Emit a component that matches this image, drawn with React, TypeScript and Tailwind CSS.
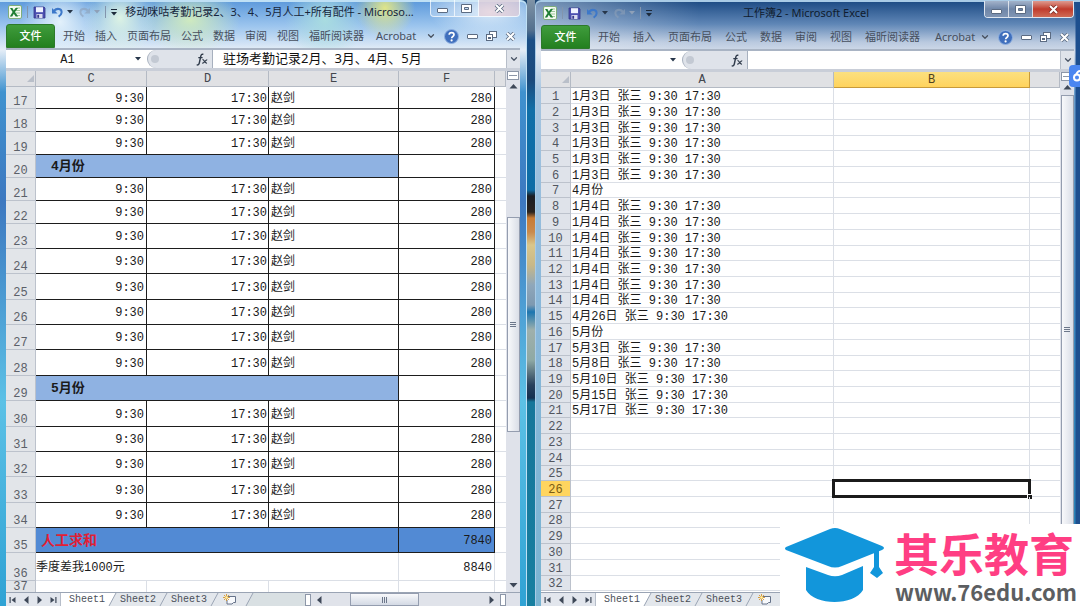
import React from 'react';
import { ChevronDown } from 'lucide-react';

const UI_FONT = "font-['Noto_Sans','Noto_Sans_CJK_SC',sans-serif]";
const CELL_FONT = "font-['Liberation_Mono','Noto_Sans_CJK_SC',monospace]";

type LeftRow = {
  n: number;
  height: string;
  kind: 'time' | 'month' | 'total' | 'note' | 'empty';
  label?: string;
  amount?: string;
};

const time = (n: number, height = 'h-[25px]'): LeftRow => ({ n, height, kind: 'time', amount: '280' });

const leftRows: LeftRow[] = [
  time(17, 'h-[22px]'),
  time(18, 'h-[23px]'),
  time(19, 'h-[23px]'),
  { n: 20, height: 'h-[23px]', kind: 'month', label: '4月份' },
  time(21, 'h-[23px]'),
  time(22, 'h-[23px]'),
  time(23),
  time(24),
  time(25, 'h-[26px]'),
  time(26),
  time(27),
  time(28, 'h-[26px]'),
  { n: 29, height: 'h-[25px]', kind: 'month', label: '5月份' },
  time(30, 'h-[26px]'),
  time(31),
  time(32),
  time(33, 'h-[26px]'),
  time(34),
  { n: 35, height: 'h-[25px]', kind: 'total', label: '人工求和', amount: '7840' },
  { n: 36, height: 'h-[28px]', kind: 'note', label: '季度差我1000元', amount: '8840' },
  { n: 37, height: 'h-[16px]', kind: 'empty' },
];

const rightLines = [
  '1月3日 张三 9:30 17:30',
  '1月3日 张三 9:30 17:30',
  '1月3日 张三 9:30 17:30',
  '1月3日 张三 9:30 17:30',
  '1月3日 张三 9:30 17:30',
  '1月3日 张三 9:30 17:30',
  '4月份',
  '1月4日 张三 9:30 17:30',
  '1月4日 张三 9:30 17:30',
  '1月4日 张三 9:30 17:30',
  '1月4日 张三 9:30 17:30',
  '1月4日 张三 9:30 17:30',
  '1月4日 张三 9:30 17:30',
  '1月4日 张三 9:30 17:30',
  '4月26日 张三 9:30 17:30',
  '5月份',
  '5月3日 张三 9:30 17:30',
  '5月8日 张三 9:30 17:30',
  '5月10日 张三 9:30 17:30',
  '5月15日 张三 9:30 17:30',
  '5月17日 张三 9:30 17:30',
];

const menuTabs = ['开始', '插入', '页面布局', '公式', '数据', '审阅', '视图', '福昕阅读器'];

/* ---------- icons ---------- */

const ExcelIcon = () => (
  <svg width="14" height="14" viewBox="0 0 14 14">
    <rect x="0.5" y="0.5" width="13" height="13" rx="1.5" fill="#f3faf1" stroke="#7fae7c" />
    <path d="M8 3h4M8 5.5h4M8 8h4M8 10.5h4" stroke="#9cc79a" strokeWidth="1" />
    <path d="M2 3h2.4l1.4 2.4L7.6 3H10L7 7l3.2 4.4H7.7L5.8 8.7l-1.6 2.7H1.8L4.6 7z" fill="#1f7d33" />
  </svg>
);

const SaveIcon = () => (
  <svg width="13" height="13" viewBox="0 0 13 13">
    <path d="M1 1h10l1 1v10H1z" fill="#4b4fb0" stroke="#35378a" strokeWidth="0.8" />
    <rect x="3" y="1.2" width="7" height="5" fill="#eef2ff" />
    <rect x="3.5" y="8" width="6" height="4" fill="#d9dcf0" />
    <rect x="4.3" y="8.8" width="1.8" height="3" fill="#35378a" />
  </svg>
);

const UndoIcon = ({ flip = false }: { flip?: boolean }) => (
  <svg width="13" height="12" viewBox="0 0 13 12" className={flip ? '-scale-x-100 opacity-60' : ''}>
    <path d="M3 4.8C6 1.6 11 2.6 10.6 6.6 10.4 8.4 9 9.8 7.6 10.6" fill="none" stroke={flip ? '#8da0b8' : '#3d78c9'} strokeWidth="2" />
    <path d="M1 2v5.6h5.6z" fill={flip ? '#8da0b8' : '#3d78c9'} />
  </svg>
);

const Caret = ({ color = '#27364a' }: { color?: string }) => (
  <svg width="6" height="4" viewBox="0 0 6 4">
    <path d="M0 0h6L3 3.5z" fill={color} />
  </svg>
);

const CustomizeIcon = () => (
  <svg width="6" height="7" viewBox="0 0 6 7">
    <path d="M0 0.5h6" stroke="#1d2a3a" />
    <path d="M0 3h6L3 6.5z" fill="#1d2a3a" />
  </svg>
);

const MinIcon = () => (
  <svg width="11" height="5" viewBox="0 0 11 5">
    <rect x="0.5" y="0.5" width="10" height="4" rx="0.5" fill="#fff" stroke="#5b6b82" />
  </svg>
);

const MaxIcon = () => (
  <svg width="11" height="9" viewBox="0 0 11 9">
    <path d="M0.5 0.5h10v8h-10zM3.5 3.5v2h4v-2z" fill="#fff" fillRule="evenodd" stroke="#5b6b82" />
  </svg>
);

const CloseIcon = ({ stroke = '#5b6b82' }: { stroke?: string }) => (
  <svg width="11" height="9" viewBox="0 0 11 9">
    <path d="M2 1l7 7M9 1L2 8" stroke={stroke} strokeWidth="3.6" />
    <path d="M2 1l7 7M9 1L2 8" stroke="#fff" strokeWidth="2" />
  </svg>
);

const RestoreIcon = () => (
  <svg width="11" height="10" viewBox="0 0 11 10">
    <rect x="3.5" y="0.5" width="7" height="6" fill="#fff" stroke="#5b6b82" />
    <rect x="0.5" y="3.5" width="6" height="6" fill="#fff" stroke="#5b6b82" />
    <path d="M2 6h3v2H2z" fill="#5b6b82" />
  </svg>
);

const HelpIcon = () => (
  <svg width="15" height="15" viewBox="0 0 15 15">
    <circle cx="7.5" cy="7.5" r="7" fill="#3f6fbd" stroke="#8fb0e0" />
    <path d="M5.2 5.8c0-3 4.8-2.9 4.8-.1 0 1.8-2.3 1.8-2.3 3.5" fill="none" stroke="#fff" strokeWidth="1.7" />
    <circle cx="7.6" cy="11.4" r="1.1" fill="#fff" />
  </svg>
);

const FxIcon = () => (
  <svg width="12" height="13" viewBox="0 0 12 13">
    <path d="M7.4 1.4C5.6.6 5 2 4.6 4L3.3 10c-.4 1.8-1.3 2.3-2.6 1.7M2.3 4.6h4.3" fill="none" stroke="#2f3a4a" strokeWidth="1.4" />
    <path d="M6.5 6.8c1.8-.8 1.7 3.8 4.5 3.2M11.2 6.8C9.5 6.4 8.2 10.6 6.2 10" fill="none" stroke="#2f3a4a" strokeWidth="1.2" />
  </svg>
);

const NewSheetIcon = () => (
  <svg width="14" height="11" viewBox="0 0 14 11">
    <path d="M5 2.5h7.5v6h-2L9 10H4V6" fill="#f7f9fc" stroke="#66738a" />
    <path d="M3.5 0v7M0 3.5h7M1 1l5 5M6 1L1 6" stroke="#d9962b" strokeWidth="0.9" />
    <circle cx="3.5" cy="3.5" r="1.3" fill="#fff3a8" />
  </svg>
);

const Arrow = ({ d }: { d: string }) => (
  <svg width="9" height="8" viewBox="0 0 9 8">
    <path d={d} fill="#3e4858" />
  </svg>
);

const UP = 'M0.5 6.5h8L4.5 2z';
const DOWN = 'M0.5 2h8L4.5 6.5z';
const LEFT = 'M6.5 0v8L2 4z';
const RIGHT = 'M2.5 0v8L7 4z';
const FIRST = 'M1.5 1h1.2v6H1.5zM7.5 1v6L3.5 4z';
const LAST = 'M6.3 1h1.2v6H6.3zM1.5 1v6L5.5 4z';

/* ---------- window parts ---------- */

const TitleBar = ({ title, active }: { title: string; active: boolean }) => (
  <header className="flex h-6 shrink-0 items-center pl-[2px]">
    <div className="flex items-center gap-[5px]">
      <ExcelIcon />
      <span className="h-3 w-px bg-[#8295ad]" />
      <button aria-label="保存"><SaveIcon /></button>
      <button aria-label="撤销" className="flex items-center gap-[3px]"><UndoIcon /><Caret /></button>
      <button aria-label="恢复" className="flex items-center gap-[3px]"><UndoIcon flip /><Caret color="#8ea0b8" /></button>
      <span className="h-3 w-px bg-[#8295ad]" />
      <button aria-label="自定义快速访问工具栏"><CustomizeIcon /></button>
    </div>
    <h1 className={`min-w-0 flex-1 truncate pl-2 text-center text-[11px] ${active ? 'pr-8 text-[#101c2e]' : 'pr-4 text-[#16263c]'}`}>{title}</h1>
    <div className={`flex h-[17px] shrink-0 self-start overflow-hidden rounded-b-[4px] border border-t-0 ${active ? 'border-[#dfe6f0]' : 'border-white/70 bg-white/25'}`}>
      <button aria-label="最小化" className={`flex w-6 items-center justify-center border-r border-white/70 pt-1 ${active ? 'bg-linear-to-b from-[#a3b3ca] via-[#6f86a8] to-[#8095b4]' : ''}`}><MinIcon /></button>
      <button aria-label="最大化" className={`flex w-6 items-center justify-center border-r border-white/70 ${active ? 'bg-linear-to-b from-[#a3b3ca] via-[#6f86a8] to-[#8095b4]' : ''}`}><MaxIcon /></button>
      <button aria-label="关闭" className={`flex w-10 items-center justify-center ${active ? 'bg-linear-to-b from-[#dd9a90] via-[#c03a2c] to-[#cf6a55]' : 'bg-[#f0b9bd]/40'}`}><CloseIcon stroke={active ? '#7d2c25' : '#5b6b82'} /></button>
    </div>
  </header>
);

const Ribbon = ({ gap }: { gap: string }) => (
  <nav className="flex h-6 shrink-0 items-center text-[11px] text-[#47505e]">
    <button className="h-full w-[49px] shrink-0 rounded-t-[3px] border border-[#2c7a2a] bg-linear-to-b from-[#3f9c3c] to-[#23801f] font-medium text-white">文件</button>
    <div className={`flex min-w-0 flex-1 items-center pl-2 whitespace-nowrap ${gap}`}>
      {menuTabs.map((tab) => (
        <button key={tab}>{tab}</button>
      ))}
      <button className="pl-[2px]">Acrobat</button>
    </div>
    <div className="flex shrink-0 items-center gap-2 pr-1">
      <button aria-label="折叠功能区"><ChevronDown size={10} strokeWidth={3} /></button>
      <button aria-label="帮助"><HelpIcon /></button>
      <button aria-label="最小化工作簿"><MinIcon /></button>
      <button aria-label="还原工作簿"><RestoreIcon /></button>
      <button aria-label="关闭工作簿"><CloseIcon /></button>
    </div>
  </nav>
);

const FormulaBar = ({ cell, value }: { cell: string; value: string }) => (
  <div className="flex h-[23px] shrink-0 items-stretch border-t-2 border-b-3 border-t-[#a9b4c4] border-b-[#c9ced8] bg-white">
    <input aria-label="名称框" defaultValue={cell} className={`w-[123px] bg-white pt-[2px] text-center text-[12px] text-[#1c1c1c] outline-none ${CELL_FONT}`} />
    <button aria-label="名称列表" className="flex w-[18px] items-center justify-center"><Caret /></button>
    <div className="flex w-[66px] items-center justify-between rounded-l-full border-r border-l border-[#a7b0be] bg-[#dfe3ea] pr-1">
      <span className="ml-[3px] h-2 w-2 rounded-full bg-[#c3c9d3]" />
      <FxIcon />
    </div>
    <input aria-label="编辑栏" defaultValue={value} className="min-w-0 flex-1 bg-white pl-[10px] text-[13px] text-[#111] outline-none" />
    <button aria-label="展开编辑栏" className="flex w-[14px] items-center justify-center border-l border-[#b7bec9] bg-[#dfe3ea]">
      <ChevronDown size={10} strokeWidth={3} color="#4a5566" />
    </button>
  </div>
);

const VScroll = ({ before, thumb, after }: { before: string; thumb: string; after: string }) => (
  <div className="flex w-[14px] shrink-0 flex-col items-center bg-[#dfe2ea]">
    <div className="flex h-[9px] w-3 shrink-0 items-center justify-center border border-[#8d97a8] bg-white">
      <span className="h-px w-2 bg-[#8d97a8]" />
    </div>
    <button aria-label="向上滚动" className="flex h-3 shrink-0 items-center"><Arrow d={UP} /></button>
    <div className={before} />
    <div className={`flex w-[13px] flex-col items-center justify-center gap-px border border-[#949daf] bg-linear-to-r from-[#f8f9fb] to-[#dadee7] ${thumb}`}>
      <span className="h-px w-[6px] bg-[#6c778a]" />
      <span className="h-px w-[6px] bg-[#6c778a]" />
      <span className="h-px w-[6px] bg-[#6c778a]" />
    </div>
    <div className={after} />
    <button aria-label="向下滚动" className="flex h-[14px] shrink-0 items-center"><Arrow d={DOWN} /></button>
  </div>
);

const SheetTabs = () => (
  <footer className={`flex h-[14px] shrink-0 items-center overflow-hidden border-t border-[#9aa4b4] bg-[#d9e0e3] text-[10px] leading-[13px] text-[#4a4f58] ${CELL_FONT}`}>
    <div className="flex h-full w-[55px] shrink-0 items-center justify-around border-r border-[#b6bdc9] bg-[#e2e6ed]">
      <button aria-label="第一张"><Arrow d={FIRST} /></button>
      <button aria-label="上一张"><Arrow d={LEFT} /></button>
      <button aria-label="下一张"><Arrow d={RIGHT} /></button>
      <button aria-label="最后一张"><Arrow d={LAST} /></button>
    </div>
    {['Sheet1', 'Sheet2', 'Sheet3'].map((name, i) => (
      <React.Fragment key={name}>
        <button className={`h-full pr-[3px] ${i === 0 ? 'bg-white pl-2' : 'bg-[#e3e7ec] pl-[3px]'}`}>{name}</button>
        <svg width="9" height="13" viewBox="0 0 9 13" className="shrink-0">
          <path d="M0 0h9v13H0z" fill="#e3e7ec" />
          <path d="M0 0h8L1 13H0z" fill={i === 0 ? '#fff' : '#e3e7ec'} />
          <path d="M8 0L1 13" stroke="#9aa4b4" />
        </svg>
      </React.Fragment>
    ))}
    <button aria-label="插入工作表" className="flex h-full items-center bg-[#e3e7ec] pr-2 pl-1"><NewSheetIcon /></button>
    <svg width="9" height="13" viewBox="0 0 9 13" className="shrink-0">
      <path d="M0 0h8L1 13H0z" fill="#e3e7ec" />
      <path d="M8 0L1 13" stroke="#9aa4b4" />
    </svg>
    <div className="flex-1" />
    <div className="flex h-full w-[201px] shrink-0 items-center bg-[#e0e3ea]">
      <span className="h-3 w-[6px] border border-[#8d97a8] bg-white" />
      <button aria-label="向左滚动" className="ml-1"><Arrow d={LEFT} /></button>
      <div className="flex-[26]" />
      <div className="flex h-full flex-[66] items-center justify-center gap-px border border-[#949daf] bg-linear-to-b from-[#f8f9fb] to-[#d3d9e4]">
        <span className="h-[6px] w-px bg-[#6c778a]" />
        <span className="h-[6px] w-px bg-[#6c778a]" />
        <span className="h-[6px] w-px bg-[#6c778a]" />
      </div>
      <div className="flex-[68]" />
      <button aria-label="向右滚动" className="mr-1"><Arrow d={RIGHT} /></button>
      <span className="h-3 w-[6px] border border-[#8d97a8] bg-white" />
    </div>
    <div className="h-full w-[14px] shrink-0 bg-[#dfe2ea]" />
  </footer>
);

const HEAD = 'h-4 border-r border-b border-[#b4bac4] bg-[#e0e1e4] p-0 font-normal text-[#42464d]';
const ROW_HEAD = 'border-r border-b border-[#bcc2cc] p-0 text-center font-normal';
const INK = 'border-r border-b border-[#1d1d1d] pt-[2px]';
const GRID = 'border-r border-b border-[#dbdfe6] pt-[2px]';

const Corner = () => (
  <th className={HEAD} aria-label="全选">
    <svg width="9" height="8" viewBox="0 0 9 8" className="ml-auto"><path d="M8 0v7H1z" fill="#b9bfc9" /></svg>
  </th>
);

const LeftCells = ({ row }: { row: LeftRow }) => {
  if (row.kind === 'time') {
    return (
      <>
        <td className={`${INK} pr-[2px] text-right`}>9:30</td>
        <td className={`${INK} pr-px text-right`}>17:30</td>
        <td className={`${INK} pl-[2px]`}>赵剑</td>
        <td className={`${INK} pr-[2px] text-right`}>{row.amount}</td>
      </>
    );
  }
  if (row.kind === 'month') {
    return (
      <>
        <td colSpan={3} className={`${INK} bg-[#8fb2e2] pl-[15px] text-[13px] font-bold`}>{row.label}</td>
        <td className={INK} />
      </>
    );
  }
  if (row.kind === 'total') {
    return (
      <>
        <td colSpan={3} className={`${INK} bg-[#528ad4] pl-[5px] text-[14px] font-bold text-[#e01f35]`}>{row.label}</td>
        <td className={`${INK} bg-[#528ad4] pr-[2px] text-right`}>{row.amount}</td>
      </>
    );
  }
  if (row.kind === 'note') {
    return (
      <>
        <td colSpan={3} className={GRID}>{row.label}</td>
        <td className={`${GRID} pr-[2px] text-right`}>{row.amount}</td>
      </>
    );
  }
  return (
    <>
      <td className={GRID} />
      <td className={GRID} />
      <td className={GRID} />
      <td className={GRID} />
    </>
  );
};

const AttendanceSheet = () => (
  <table className={`w-full table-fixed border-separate border-spacing-0 text-[12px] leading-[12px] text-[#1a1a1a] ${CELL_FONT}`}>
    <colgroup>
      <col className="w-[30px]" />
      <col className="w-[111px]" />
      <col className="w-[122px]" />
      <col className="w-[130px]" />
      <col className="w-[96px]" />
      <col />
    </colgroup>
    <thead>
      <tr>
        <Corner />
        {['C', 'D', 'E', 'F'].map((c) => (
          <th key={c} className={HEAD}>{c}</th>
        ))}
        <th className={HEAD} />
      </tr>
    </thead>
    <tbody>
      {leftRows.map((row) => (
        <tr key={row.n}>
          <th className={`${ROW_HEAD} ${row.height} bg-[#e2e5e9] text-[#5b6068] ${row.kind === 'empty' ? 'align-top' : 'align-bottom'}`}>{row.n}</th>
          <LeftCells row={row} />
          <td className="border-b border-[#dbdfe6]" />
        </tr>
      ))}
    </tbody>
  </table>
);

const BlankBookSheet = () => (
  <table className={`w-full table-fixed border-separate border-spacing-0 text-[12px] leading-[12px] text-[#1a1a1a] ${CELL_FONT}`}>
    <colgroup>
      <col className="w-[30px]" />
      <col className="w-[263px]" />
      <col className="w-[196px]" />
      <col />
    </colgroup>
    <thead>
      <tr>
        <Corner />
        <th className={HEAD}>A</th>
        <th className="h-4 border-r border-b border-[#c79a3a] bg-linear-to-b from-[#fbe07f] to-[#ffd35c] p-0 font-normal text-[#4d4120]">B</th>
        <th className={HEAD} />
      </tr>
    </thead>
    <tbody>
      {Array.from({ length: 32 }, (_, i) => {
        const n = i + 1;
        const height = i % 7 === 3 || i % 7 === 6 ? 'h-[15px]' : 'h-4';
        const active = n === 26;
        return (
          <tr key={n}>
            <th className={`${ROW_HEAD} ${height} pt-[2px] ${active ? 'bg-[#ffd55f] text-[#7a5c14]' : 'bg-[#dfe3ea] text-[#51565f]'}`}>{n}</th>
            <td className={`${GRID} pl-px whitespace-nowrap`}>{rightLines[i]}</td>
            <td className={`${GRID} relative`}>
              {active && (
                <div className="absolute -inset-x-[2px] -inset-y-[2px] border-3 border-[#1b1b1b]">
                  <span className="absolute -right-1 -bottom-1 h-[5px] w-[5px] border-t border-l border-white bg-[#1b1b1b]" />
                </div>
              )}
            </td>
            <td className="border-b border-[#dbdfe6]" />
          </tr>
        );
      })}
    </tbody>
  </table>
);

const SiteBadge = () => (
  <div className="absolute right-0 bottom-0 flex h-[82px] w-[300px] items-center bg-white pl-1">
    <svg width="102" height="78" viewBox="0 0 102 78" className="shrink-0">
      <path d="M2 21L46 3q5-2 10 0l42 17q4 2 0 4L58 40q-7 3-14 0L2 24q-2-1.500 0-3z" fill="#1296db" />
      <path d="M22 41l22 8q7 2.500 14 0l21-9v24c-9 16-48 16-57 0z" fill="#1296db" />
      <path d="M90 24h5v17l4 6-6 5-7-5 4-6z" fill="#1296db" />
    </svg>
    <div className="flex flex-col pl-2 font-['Noto_Sans_CJK_SC',sans-serif] font-bold whitespace-nowrap">
      <span className="text-[45px] leading-[52px] text-[#ff3e83]">其乐教育</span>
      <span className="pl-px text-[22px] leading-[24px] text-[#5c5e61]">www.76edu.com</span>
    </div>
  </div>
);

const App: React.FC = () => {
  return (
    <main className={`relative grid h-screen grid-cols-[527fr_8px_545fr] overflow-hidden bg-[#1c4672] ${UI_FONT}`}>
      <section className="flex min-h-0 min-w-0 flex-col rounded-tr-md border-t-2 border-r border-[#bfe0f5] bg-[radial-gradient(ellipse_36px_40px_at_120px_16px,#ddf3e4,transparent),radial-gradient(ellipse_50px_34px_at_190px_18px,#cfeabf,transparent),radial-gradient(ellipse_30px_30px_at_385px_6px,#dfe58a,transparent),radial-gradient(ellipse_40px_40px_at_325px_18px,#a9dce0,transparent),radial-gradient(ellipse_40px_40px_at_60px_20px,#e3f1fb,transparent),radial-gradient(ellipse_60px_30px_at_490px_10px,#d8e9f8,transparent),linear-gradient(to_bottom,#5f9bdc,#9cc5ee_24px,#e4edf7_48px,#3f92cf_90px,#3d78c0_200px,#5cc1e6_400px,#2fa2d4)] px-[6px]">
        <div className="-mt-[2px] flex min-h-0 flex-1 flex-col">
          <TitleBar title="移动咪咕考勤记录2、3、4、5月人工+所有配件 - Microso…" active={false} />
          <Ribbon gap="gap-[10px]" />
          <FormulaBar cell="A1" value="驻场考勤记录2月、3月、4月、5月" />
          <div className="flex min-h-0 flex-1 bg-white">
            <div className="min-w-0 flex-1 overflow-hidden">
              <AttendanceSheet />
            </div>
            <VScroll before="flex-[126]" thumb="flex-[214]" after="flex-[147]" />
          </div>
          <SheetTabs />
        </div>
      </section>

      {/* strip of desktop between the two windows */}
      <div className="bg-[linear-gradient(to_bottom,#7f93a6,#54708e_30px,#1c4f86_40px,#1b4a7c_80px,#0f6fa8_110px,#0d6ca6_190px,#1b1e24_196px,#2a2420_212px,#c77b35_218px,#c98a4c_232px,#d9c68a_245px,#c8b888_265px,#8fa7ba_285px,#7e99b0_305px,#1c76b0_312px,#9fb0ac_330px,#8fa9a4_360px,#28405c_385px,#14304f_398px,#16769a_402px,#177fa0)]" />

      <section className="flex min-h-0 min-w-0 flex-col rounded-tl-md border-t-2 border-l border-[#a9cbe6] bg-[linear-gradient(to_left,#1d4f8f_4px,transparent_5px),linear-gradient(to_right,#ffffff66,transparent_30%),linear-gradient(to_bottom,#1f4d86,#5f86b6_22px,#b9c9df_40px,#d3dcea_50px,#6d9fcc_90px,#3f8ac2_300px,#2383b4)] pr-[6px] pl-[5px]">
        <div className="-mt-px flex min-h-0 flex-1 flex-col">
          <TitleBar title="工作簿2 - Microsoft Excel" active />
          <Ribbon gap="gap-[13px]" />
          <FormulaBar cell="B26" value="" />
          <div className="flex min-h-0 flex-1 bg-white">
            <div className="min-w-0 flex-1 overflow-hidden">
              <BlankBookSheet />
            </div>
            <VScroll before="flex-[2]" thumb="flex-[470]" after="flex-[14]" />
          </div>
          <SheetTabs />
        </div>
      </section>

      {/* netdisk bubble docked to the screen edge */}
      <button aria-label="网盘" className="absolute top-[65px] right-0 flex h-[22px] w-[11px] items-center justify-end overflow-hidden rounded-l-[4px] bg-[#4a86f0]">
        <svg width="8" height="14" viewBox="0 0 8 14">
          <circle cx="5" cy="8.5" r="3" fill="none" stroke="#fff" strokeWidth="2" />
          <path d="M4 6C5 3 6.5 2 8 2" fill="none" stroke="#fff" strokeWidth="2" />
        </svg>
      </button>
      <SiteBadge />
    </main>
  );
};

export default App;
